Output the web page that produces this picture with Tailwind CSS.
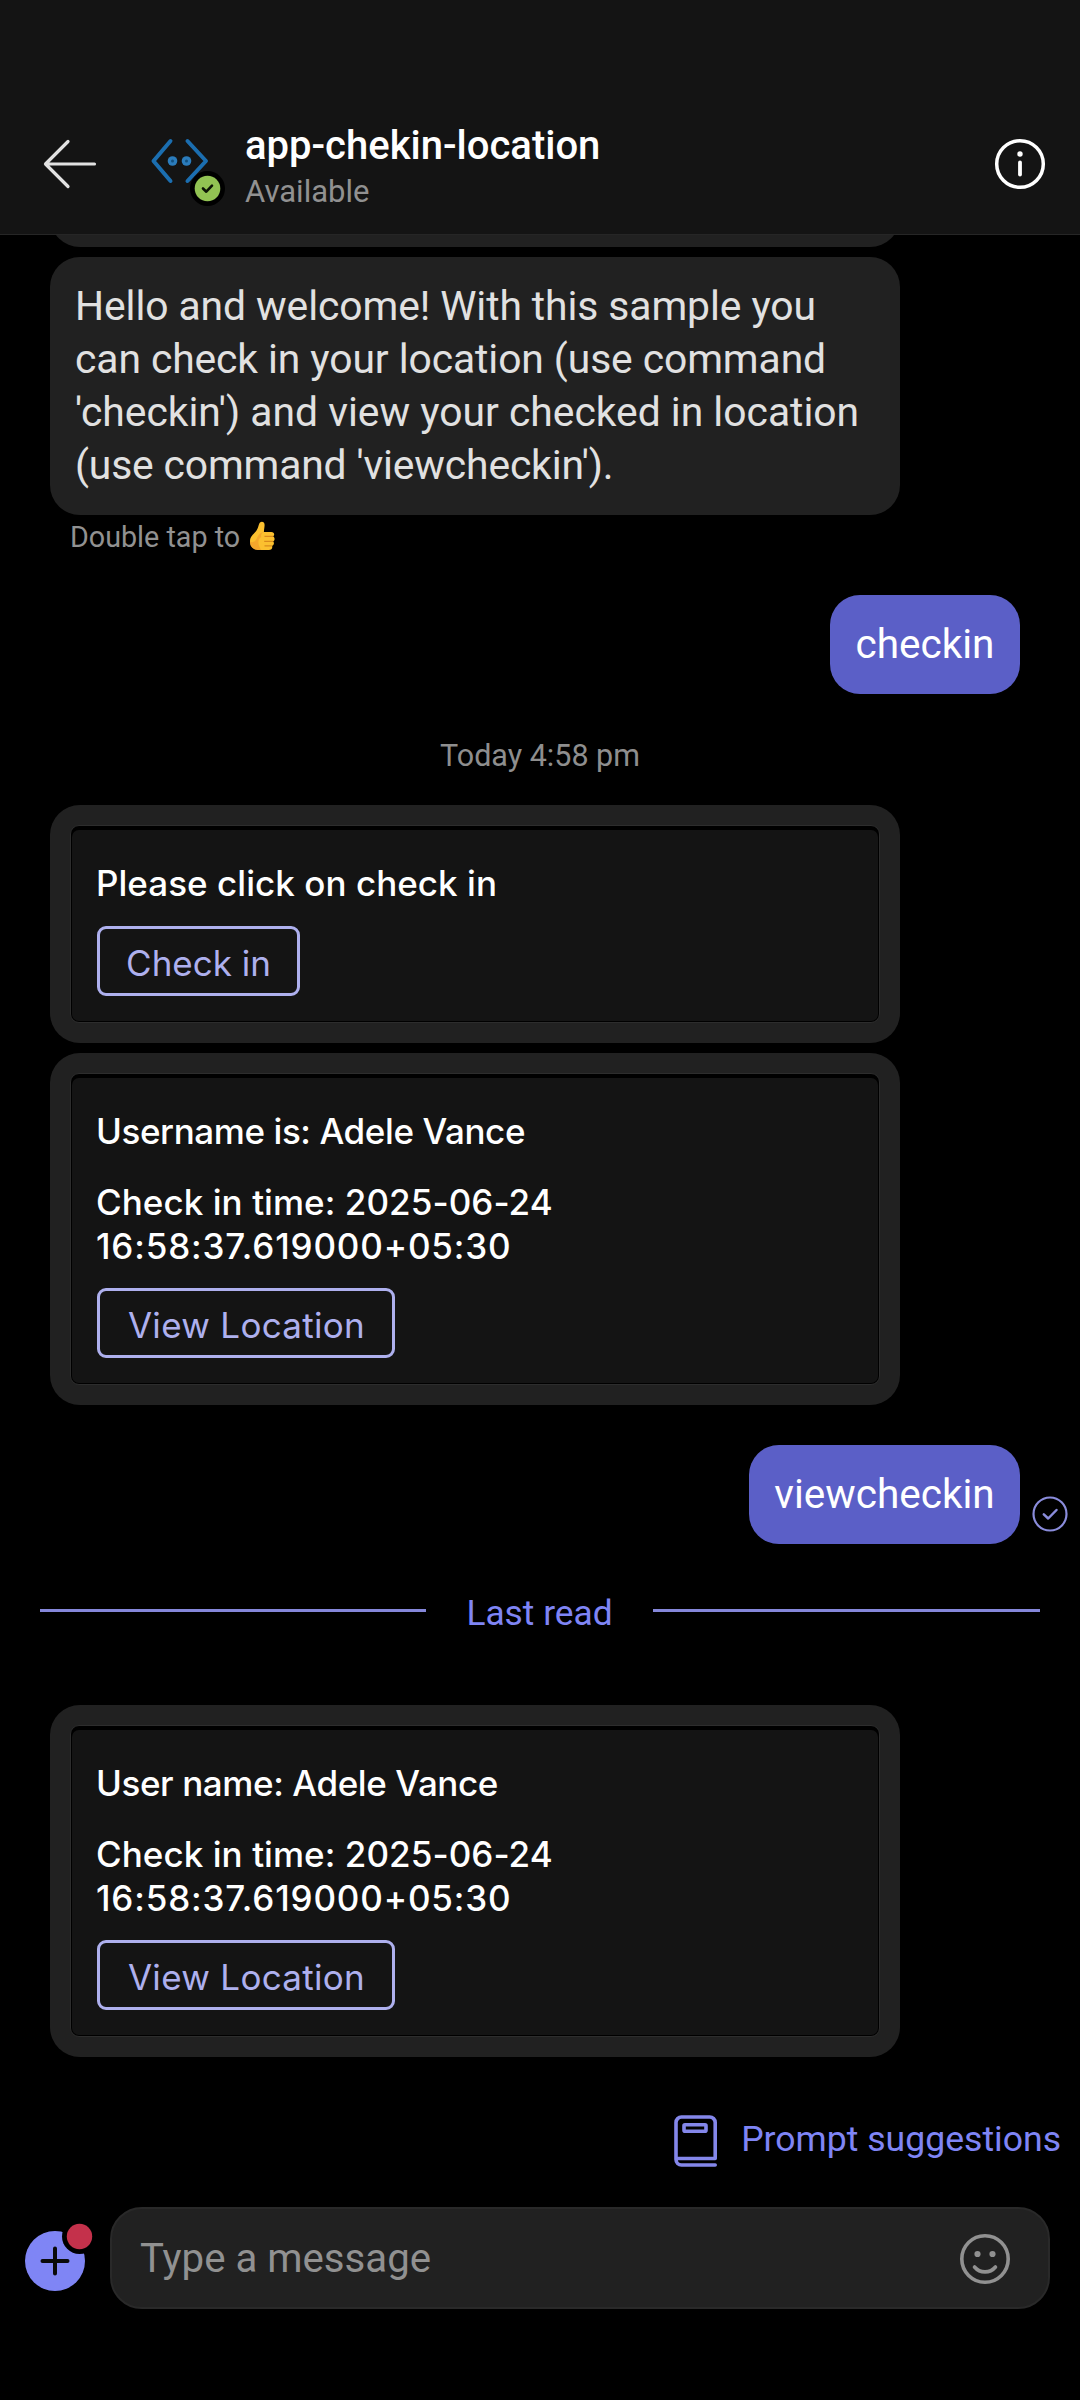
<!DOCTYPE html>
<html lang="en">
<head>
<meta charset="utf-8">
<title>app-chekin-location</title>
<script src="https://cdn.jsdelivr.net/npm/@tailwindcss/browser@4"></script>
</head>
<body class="bg-black">
<div class="flex h-[2400px] w-[1080px] flex-col overflow-hidden bg-black font-['Roboto',sans-serif] whitespace-nowrap">

  <!-- App bar -->
  <header class="flex h-[235px] shrink-0 items-start border-b border-[#262626] bg-[#141414] pt-[118px]">
    <svg class="mt-[20px] ml-[42px] h-[52px] w-[56px]" viewBox="0 0 56 52" fill="none" stroke="#e2e2e2" stroke-width="3.2" stroke-linecap="round" stroke-linejoin="round"><path d="M26 3.5 3.5 26 26 48.500M4 26H52.500"/></svg>
    <div class="relative mt-[18px] ml-[51px] h-[56px] w-[60px]">
      <svg class="h-[56px] w-[60px]" viewBox="0 0 60 56" fill="none" stroke="#1b6eb0" stroke-width="4" stroke-linecap="round" stroke-linejoin="round"><path d="M21.500 5 4.500 25 21.500 45M38.500 5 57 25 38.500 45"/><g fill="#2b7cbc" stroke="none"><circle cx="23.500" cy="25" r="4.800"/><circle cx="37.500" cy="25" r="4.800"/></g><g fill="#12507f" stroke="none"><circle cx="23.500" cy="25" r="1.500"/><circle cx="37.500" cy="25" r="1.500"/></g></svg>
      <svg class="absolute top-[35px] left-[41px] h-[35px] w-[35px]" viewBox="0 0 35 35" fill="none"><circle cx="17.500" cy="17.500" r="17.500" fill="#000"/><circle cx="17.500" cy="17.500" r="12.800" fill="#92c353"/><path d="M13 17.500l3.300 3.200 5.700-6" stroke="#0c1405" stroke-width="2.600" stroke-linecap="round" stroke-linejoin="round"/></svg>
    </div>
    <div class="ml-[36px] grow pt-[1px]">
      <div class="h-[54px] text-[40px] leading-[54px] font-medium text-white">app-chekin-location</div>
      <div class="mt-[-1px] h-[40px] text-[31px] leading-[40px] text-[#919191]">Available</div>
    </div>
    <svg class="mt-[20px] mr-[34px] h-[52px] w-[52px]" viewBox="0 0 52 52" fill="none" stroke="#fff" stroke-width="3.500" stroke-linecap="round"><circle cx="26" cy="26" r="23.300"/><path d="M26 24.500V36.500" stroke-width="3.800"/><circle cx="26" cy="16" r="2.700" fill="#fff" stroke="none"/></svg>
  </header>

  <!-- Conversation -->
  <main class="flex flex-col">
    <div class="ml-[50px] flex h-[12px] w-[850px] items-end overflow-hidden">
      <div class="h-[80px] w-full shrink-0 rounded-[30px] bg-[#212121]"></div>
    </div>
    <div class="mt-[10px] ml-[50px] h-[258px] w-[850px] rounded-[30px] bg-[#212121] pt-[23px] pl-[25px] text-[40.8px] leading-[53px] text-[#e1e1e1]"><span class="tracking-[-0.08px]">Hello and welcome! With this sample you<br>can check in your location (use command</span><br>'checkin') and view your checked in location<br><span class="tracking-[-0.14px]">(use command 'viewcheckin').</span></div>
    <div class="mt-[4px] ml-[70px] flex h-[36px] items-center text-[28.7px] leading-[36px] text-[#919191]">Double tap to
      <svg class="mb-[3px] ml-[9px] h-[30px] w-[26px]" viewBox="0 0 26 30"><path d="M11 1.500c2.200-1.600 4.700-.2 4.600 2.600 0 2-.6 4.300-.7 6.900h7.300c3.300 0 3.800 3.400 1.800 4.300 2.200 1.200 2 4.300.1 5 1.400 1.300 1 4-1 4.500.7 2.300-.6 4.200-3.200 4.200h-9.400C4.300 29 1 26 1 20.500c0-5.200 3-6.500 6.200-10.500C9.700 6.800 9.300 3.500 11 1.500z" fill="#fbc02f"/><path d="M14.900 11c-2.500 1-3.200 3-2.700 5-4 2.500-3.500 8 0 12.900h-1.900C4.300 29 1 26 1 20.500c4 2 6-1 7.500-4.500 1.500-3 3.400-4.500 6.400-5z" fill="#f09a2b" opacity=".65"/><path d="M15.500 15.400H24M15.200 20.300h8.900M15.500 24.900h7.400" stroke="#d98a1c" stroke-width="1.200"/></svg>
    </div>

    <div class="mt-[40px] mr-[60px] flex h-[99px] w-[190px] items-center justify-center self-end rounded-[30px] bg-[#5b5fc7] text-[40.5px] text-white">checkin</div>

    <div class="mt-[42px] h-[39px] text-center text-[30.5px] leading-[40px] text-[#8e8e8e]">Today 4:58 pm</div>

    <!-- Check-in card -->
    <section class="mt-[30px] ml-[50px] h-[238px] w-[850px] rounded-[30px] bg-[#212121] p-[20px] font-['Inter',sans-serif]">
      <div class="h-full rounded-[9px] border border-[#2d2d2d] bg-black p-[1px] pt-[4px]">
        <div class="h-full rounded-[7px] bg-[#141414] pt-[31px] pl-[25px]">
          <p class="ml-[-1px] text-[35px] leading-[44px] font-medium tracking-[0.04px] text-white">Please click on check in</p>
          <div class="mt-[21px] flex h-[70px] w-[203px] items-center justify-center rounded-[9px] border-[3px] border-[#aeb0ee] pt-[4px] text-[35px] text-[#aeb0ee]">Check in</div>
        </div>
      </div>
    </section>

    <!-- Result card -->
    <section class="mt-[10px] ml-[50px] h-[352px] w-[850px] rounded-[30px] bg-[#212121] p-[20px] font-['Inter',sans-serif]">
      <div class="h-full rounded-[9px] border border-[#2d2d2d] bg-black p-[1px] pt-[4px]">
        <div class="h-full rounded-[7px] bg-[#141414] pt-[31px] pl-[25px]">
          <p class="ml-[-1px] text-[35px] leading-[44px] font-medium tracking-[-0.41px] text-white">Username is: Adele Vance</p>
          <p class="mt-[27px] ml-[-1px] text-[35px] leading-[44px] font-medium text-white"><span class="tracking-[0.06px]">Check in time: 2025-06-24</span><br><span class="tracking-[0.84px]">16:58:37.619000+05:30</span></p>
          <div class="mt-[20px] flex h-[70px] w-[298px] items-center justify-center rounded-[9px] border-[3px] border-[#aeb0ee] pt-[4px] pl-[1px] text-[35px] tracking-[0.3px] text-[#aeb0ee]">View Location</div>
        </div>
      </div>
    </section>

    <div class="mt-[40px] mr-[12px] flex h-[99px] self-end">
      <div class="flex h-[99px] w-[271px] items-center justify-center rounded-[30px] bg-[#5b5fc7] text-[40.5px] text-white">viewcheckin</div>
      <svg class="mt-[51px] ml-[12px] h-[36px] w-[36px]" viewBox="0 0 36 36" fill="none" stroke="#8a8cdb" stroke-linecap="round" stroke-linejoin="round"><circle cx="18" cy="18" r="16.500" stroke-width="2.200"/><path d="M11.800 18.300 16.200 22.500 24.500 14" stroke-width="2.500"/></svg>
    </div>

    <!-- Last read divider -->
    <div class="mt-[47px] flex h-[44px] items-center px-[40px] text-[35.3px] leading-[44px] text-[#7f85f5]">
      <div class="mb-[5px] h-[3px] w-[386px] bg-[#8587da]"></div>
      <div class="grow text-center">Last read</div>
      <div class="mb-[5px] h-[3px] w-[387px] bg-[#8587da]"></div>
    </div>

    <section class="mt-[70px] ml-[50px] h-[352px] w-[850px] rounded-[30px] bg-[#212121] p-[20px] font-['Inter',sans-serif]">
      <div class="h-full rounded-[9px] border border-[#2d2d2d] bg-black p-[1px] pt-[4px]">
        <div class="h-full rounded-[7px] bg-[#141414] pt-[31px] pl-[25px]">
          <p class="ml-[-1px] text-[35px] leading-[44px] font-medium tracking-[-0.40px] text-white">User name: Adele Vance</p>
          <p class="mt-[27px] ml-[-1px] text-[35px] leading-[44px] font-medium text-white"><span class="tracking-[0.06px]">Check in time: 2025-06-24</span><br><span class="tracking-[0.84px]">16:58:37.619000+05:30</span></p>
          <div class="mt-[20px] flex h-[70px] w-[298px] items-center justify-center rounded-[9px] border-[3px] border-[#aeb0ee] pt-[4px] pl-[1px] text-[35px] tracking-[0.3px] text-[#aeb0ee]">View Location</div>
        </div>
      </div>
    </section>
  </main>

  <!-- Prompt suggestions -->
  <div class="mt-[58px] flex h-[52px] items-center self-end pr-[19px] text-[#7f85f5]">
    <svg class="h-[52px] w-[44px]" viewBox="0 0 44 52" fill="none" stroke="#8487ea" stroke-width="3.600" stroke-linecap="round" stroke-linejoin="round"><path d="M41.200 50H7.500A5.500 5.500 0 0 1 2 44.500V7.500A5.500 5.500 0 0 1 7.500 2H35.700A5.500 5.500 0 0 1 41.200 7.500V43.500H2.500"/><rect x="10" y="9.800" width="22" height="6.400" rx="1"/></svg>
    <span class="ml-[23px] pb-[3px] text-[35.6px]">Prompt suggestions</span>
  </div>

  <!-- Composer -->
  <footer class="mt-[40px] flex h-[102px] shrink-0">
    <svg class="mt-[12px] ml-[24px] h-[74px] w-[74px]" viewBox="0 0 74 74" fill="none"><circle cx="31" cy="42" r="30" fill="#7f85f5"/><path d="M31 29.500V54.500M18.500 42H43.500" stroke="#0a0a0a" stroke-width="4" stroke-linecap="round"/><circle cx="55.500" cy="17.500" r="17.500" fill="#000"/><circle cx="55.500" cy="17.500" r="12.700" fill="#c4314b"/></svg>
    <div class="ml-[12px] flex h-[102px] w-[940px] items-center justify-between rounded-[32px] border-2 border-[#292929] bg-[#212121] pr-[37px] pl-[28px]">
      <span class="pt-[3px] text-[40.2px] text-[#919191]">Type a message</span>
      <svg class="mt-[2px] h-[52px] w-[52px]" viewBox="0 0 52 52" fill="none" stroke="#919191" stroke-width="3.600" stroke-linecap="round"><circle cx="26" cy="26" r="23.200"/><path d="M15.500 34C21 40.500 31 40.500 36.500 34"/><g fill="#919191" stroke="none"><circle cx="18.500" cy="21" r="3.100"/><circle cx="33.500" cy="21" r="3.100"/></g></svg>
    </div>
  </footer>
</div>
</body>
</html>
